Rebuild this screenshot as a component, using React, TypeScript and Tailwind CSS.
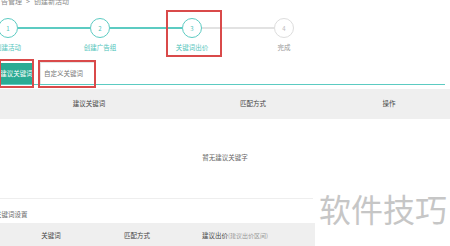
import React from 'react';

const teal = 'border-[#5ccbc2] text-[#4fc4ba]';

const Step: React.FC<{ n: number; label: string; done?: boolean }> = ({ n, label, done = true }) => (
  <div className="flex w-5 flex-col items-center">
    <div
      className={`flex h-5 w-5 items-center justify-center rounded-full border-[1.5px] bg-white text-[6px] ${
        done ? teal : 'border-[#dddddd] text-[#bbbbbb]'
      }`}
    >
      {n}
    </div>
    <div className={`mt-[5px] whitespace-nowrap text-[6.5px] leading-[8px] ${done ? 'text-[#4fc4ba]' : 'text-[#999999]'}`}>
      {label}
    </div>
  </div>
);

const Line: React.FC<{ done?: boolean }> = ({ done = true }) => (
  <div className={`mt-[9px] h-[1.5px] w-[72px] ${done ? 'bg-[#5ccbc2]' : 'bg-[#e2e2e2]'}`} />
);

const App: React.FC = () => {
  return (
    <div
      className="relative h-[246px] w-[450px] overflow-hidden bg-white"
      style={{ fontFamily: '"Noto Sans CJK SC", "Noto Sans", sans-serif' }}
    >
      {/* breadcrumb, cut off at the top */}
      <div className="-mt-[4px] ml-[-6px] flex h-[10px] items-center gap-[4px] whitespace-nowrap text-[7px] leading-[10px] text-[#888888]">
        <span>广告管理</span>
        <span>&gt;</span>
        <span>创建新活动</span>
      </div>

      {/* steps */}
      <div className="ml-[-2px] mt-[12px] flex items-start">
        <Step n={1} label="创建活动" />
        <Line />
        <Step n={2} label="创建广告组" />
        <Line />
        <Step n={3} label="关键词出价" />
        <Line done={false} />
        <Step n={4} label="完成" done={false} />
      </div>

      {/* tabs */}
      <div className="mt-[11px] flex w-[445px] items-end border-b-[1.5px] border-[#5ccbc2]">
        <div className="flex h-[21px] w-[33px] items-center justify-center bg-[#2bab94] text-[6.5px] text-white">
          建议关键词
        </div>
        <div className="ml-[7px] flex h-[22px] w-[55px] items-center border border-b-0 border-[#e4e4e4] pl-[3px] text-[6.5px] text-[#777777]">
          自定义关键词
        </div>
      </div>

      {/* suggested keywords table */}
      <div className="mt-[4px] grid h-[30px] grid-cols-[178px_150px_1fr] items-center bg-[#efefef] text-[6.5px] text-[#444444]">
        <div className="text-center">建议关键词</div>
        <div className="text-center">匹配方式</div>
        <div className="text-center">操作</div>
      </div>
      <div className="h-[79px] pt-[34px] text-center text-[6.5px] leading-[8px] text-[#666666]">暂无建议关键字</div>

      <div className="w-[313px] border-t border-[#eeeeee]" />

      <div className="ml-[-5px] mt-[11px] text-[6.5px] leading-[8px] text-[#666666]">关键词设置</div>

      <div className="mt-[5px] flex h-[26px] w-[315px] items-center bg-[#efefef] text-[6.5px] text-[#444444]">
        <div className="w-[102px] text-center">关键词</div>
        <div className="w-[70px] text-center">匹配方式</div>
        <div className="pl-[30px]">
          建议出价<span className="text-[6px] text-[#999999]">(建议出价区间)</span>
        </div>
      </div>

      {/* annotation boxes */}
      <div className="pointer-events-none absolute left-[166px] top-[10px] h-[47px] w-[56px] border-2 border-[#d94a4a]" />
      <div className="pointer-events-none absolute left-[-1px] top-[59px] h-[29px] w-[35px] border-2 border-[#d94a4a]" />
      <div className="pointer-events-none absolute left-[38px] top-[60px] h-[28px] w-[58px] border-2 border-[#d94a4a]" />

      {/* watermark */}
      <div className="pointer-events-none absolute left-[319px] top-[190px] whitespace-nowrap text-[32px] leading-[36px] text-[#c6c6c6]">
        软件技巧
      </div>
    </div>
  );
};

export default App;
